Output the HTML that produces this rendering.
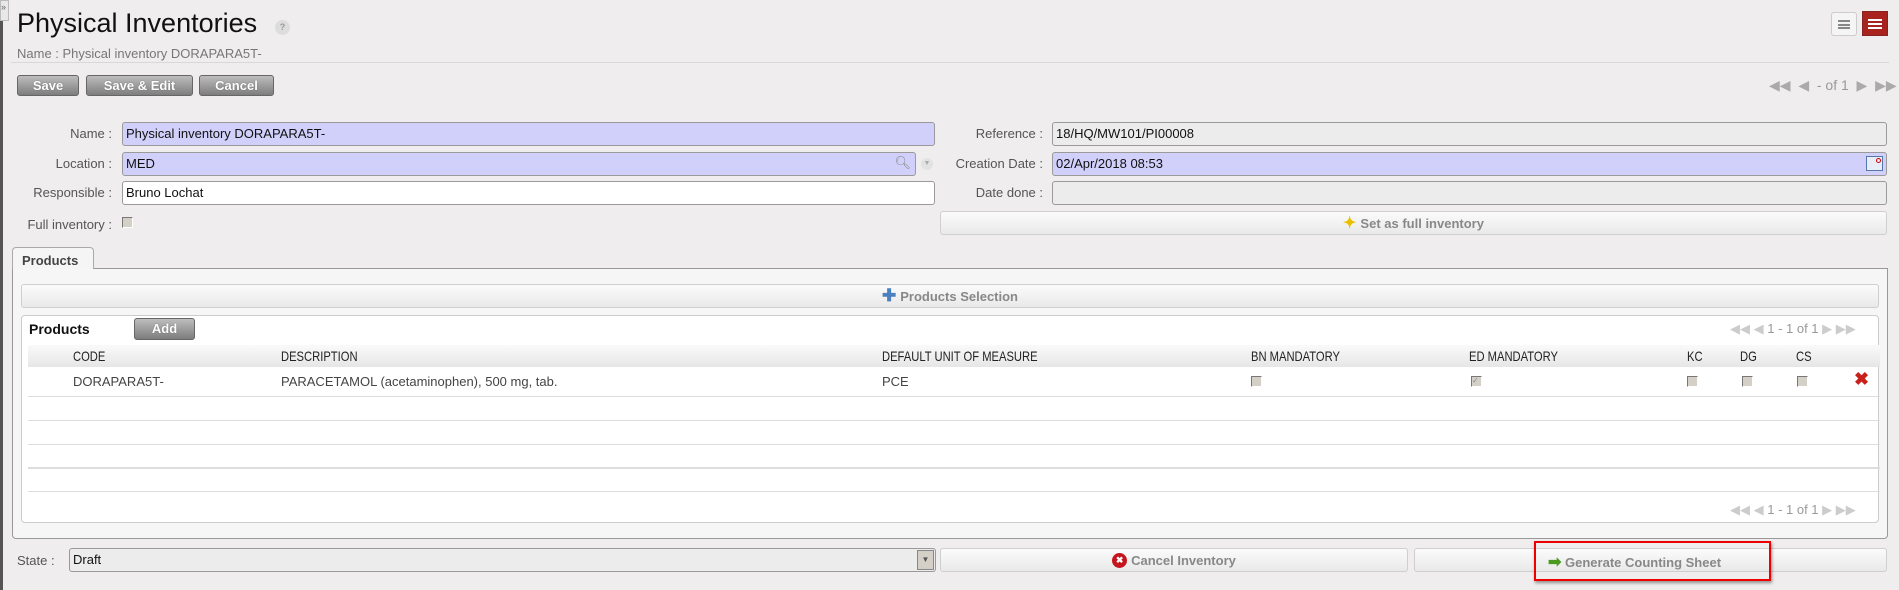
<!DOCTYPE html>
<html><head><meta charset="utf-8"><style>
*{box-sizing:border-box;margin:0;padding:0}
body{width:1899px;height:590px;background:#efeded;font-family:"Liberation Sans",sans-serif;font-size:13px;color:#333;position:relative;overflow:hidden}
.a{position:absolute}
.lbl{position:absolute;color:#555;font-size:13px;text-align:right}
.inp{position:absolute;border:1px solid #9a9a9a;border-radius:3px;background:#fff;padding:3px 3px;font-size:13px;color:#111;height:24px;line-height:16px}
.blue{background:#d0d0fb}
.ro{background:#ececec}
.btn{position:absolute;height:21px;border:1px solid #666;border-radius:3px;background:linear-gradient(#bdbdbd,#7d7d7d);color:#fff;font-weight:bold;font-size:13px;text-align:center;line-height:19px;text-shadow:0 0 1px #555}
.wbtn{position:absolute;border:1px solid #cfcfcf;border-radius:3px;background:linear-gradient(#fbfbfb,#e9e9e9);color:#888;font-weight:bold;font-size:13px;display:flex;align-items:center;justify-content:center;gap:4px}
.hd{position:absolute;font-size:14px;color:#222;top:348px;transform:scaleX(.8);transform-origin:0 0;white-space:nowrap}
.cb{position:absolute;width:11px;height:11px;background:#d4d0c8;border-top:1px solid #777;border-left:1px solid #777;border-right:1px solid #fff;border-bottom:1px solid #fff;top:376px}
.rl{position:absolute;left:28px;width:1852px;height:1px;background:#ddd}
.pg{position:absolute;color:#999;font-size:13px}
</style></head><body>
<div class="a" style="left:0;top:0;width:3px;height:590px;background:#555"></div>
<div class="a" style="left:0;top:0;width:9px;height:21px;background:#e8e8e8;border:1px solid #bbb;font-size:9px;color:#666;line-height:12px">»</div>

<div class="a" style="left:17px;top:8px;font-size:27px;color:#111">Physical Inventories</div>
<div class="a" style="left:275px;top:20px;width:15px;height:15px;border-radius:50%;background:#ddd;color:#999;font-size:9px;text-align:center;line-height:15px;font-weight:bold">?</div>
<div class="a" style="left:17px;top:46px;color:#777;font-size:13px">Name : Physical inventory DORAPARA5T-</div>
<div class="a" style="left:11px;top:62px;width:1878px;height:1px;background:#d8d8d8"></div>

<div class="a" style="left:1831px;top:12px;width:26px;height:24px;border:1px solid #ccc;border-radius:3px;background:#f5f5f5"><div style="margin:7px 6px;height:9px;border-top:2px solid #888;border-bottom:2px solid #888;"><div style="margin-top:1.5px;height:2px;background:#888"></div></div></div>
<div class="a" style="left:1862px;top:11px;width:26px;height:25px;background:#a8231d;border:1px solid #822"><div style="margin:7px 5px;height:10px;border-top:2px solid #fff;border-bottom:2px solid #fff"><div style="margin-top:2px;height:2px;background:#fff"></div></div></div>

<div class="btn" style="left:17px;top:75px;width:62px">Save</div>
<div class="btn" style="left:86px;top:75px;width:107px">Save &amp; Edit</div>
<div class="btn" style="left:199px;top:75px;width:75px">Cancel</div>
<div class="pg" style="left:1769px;top:77px;font-size:14px;color:#aaa">◀◀ &nbsp;◀ &nbsp;<b style="color:#999;font-weight:normal">- of 1</b> &nbsp;▶ &nbsp;▶▶</div>

<div class="lbl" style="left:0;width:112px;top:126px">Name :</div>
<div class="inp blue" style="left:122px;top:122px;width:813px">Physical inventory DORAPARA5T-</div>
<div class="lbl" style="left:0;width:112px;top:156px">Location :</div>
<div class="inp blue" style="left:122px;top:152px;width:794px">MED<span style="position:absolute;right:4px;top:2px;color:#888">&#x1F50D;&#xFE0E;</span></div>
<div class="a" style="left:921px;top:158px;width:12px;height:12px;border-radius:50%;background:#e2e2e2;color:#aaa;font-size:7px;text-align:center;line-height:12px">▼</div>
<div class="lbl" style="left:0;width:112px;top:185px">Responsible :</div>
<div class="inp" style="left:122px;top:181px;width:813px">Bruno Lochat</div>
<div class="lbl" style="left:0;width:112px;top:217px">Full inventory :</div>
<div class="cb" style="left:122px;top:217px"></div>

<div class="lbl" style="left:900px;width:143px;top:126px">Reference :</div>
<div class="inp ro" style="left:1052px;top:122px;width:835px">18/HQ/MW101/PI00008</div>
<div class="lbl" style="left:900px;width:143px;top:156px">Creation Date :</div>
<div class="inp blue" style="left:1052px;top:152px;width:835px">02/Apr/2018 08:53<span style="position:absolute;right:3px;top:3px;width:17px;height:15px;background:#e8eef8;border:1px solid #5577aa"><span style="position:absolute;right:1px;top:1px;width:5px;height:5px;border:1px solid #c00;border-radius:50%"></span></span></div>
<div class="lbl" style="left:900px;width:143px;top:185px">Date done :</div>
<div class="inp ro" style="left:1052px;top:181px;width:835px"></div>
<div class="wbtn" style="left:940px;top:211px;width:947px;height:24px"><span style="color:#e8c000;font-size:16px">✦</span>Set as full inventory</div>

<div class="a" style="left:12px;top:247px;width:82px;height:22px;border:1px solid #aaa;border-bottom:none;border-radius:4px 4px 0 0;background:#f5f5f5;font-weight:bold;color:#444;font-size:13px;padding:5px 0 0 9px;z-index:2">Products</div>
<div class="a" style="left:12px;top:268px;width:1876px;height:271px;border:1px solid #999;border-radius:0 0 4px 4px;background:#f6f6f6"></div>
<div class="wbtn" style="left:21px;top:284px;width:1858px;height:24px"><span style="color:#4a7fc0;font-size:17px">✚</span>Products Selection</div>
<div class="a" style="left:21px;top:315px;width:1858px;height:208px;border:1px solid #ccc;border-radius:4px;background:#fff"></div>
<div class="a" style="left:29px;top:321px;font-weight:bold;color:#111;font-size:14px">Products</div>
<div class="btn" style="left:134px;top:318px;width:61px;height:22px">Add</div>
<div class="pg" style="left:1730px;top:321px;color:#999"><span style="color:#ccc">◀◀ ◀</span> 1 - 1 of 1 <span style="color:#ccc">▶ ▶▶</span></div>
<div class="a" style="left:28px;top:345px;width:1852px;height:22px;background:linear-gradient(#fafafa,#e6e6e6)"></div>
<div class="hd" style="left:73px">CODE</div>
<div class="hd" style="left:281px">DESCRIPTION</div>
<div class="hd" style="left:882px">DEFAULT UNIT OF MEASURE</div>
<div class="hd" style="left:1251px">BN MANDATORY</div>
<div class="hd" style="left:1469px">ED MANDATORY</div>
<div class="hd" style="left:1687px">KC</div>
<div class="hd" style="left:1740px">DG</div>
<div class="hd" style="left:1796px">CS</div>
<div class="a" style="left:73px;top:374px;color:#444">DORAPARA5T-</div>
<div class="a" style="left:281px;top:374px;color:#444">PARACETAMOL (acetaminophen), 500 mg, tab.</div>
<div class="a" style="left:882px;top:374px;color:#444">PCE</div>
<div class="cb" style="left:1251px"></div>
<div class="cb" style="left:1471px;font-size:8px;line-height:8px;color:#888">✓</div>
<div class="cb" style="left:1687px"></div>
<div class="cb" style="left:1742px"></div>
<div class="cb" style="left:1797px"></div>
<div class="a" style="left:1854px;top:369px;color:#c8201a;font-size:18px;font-weight:bold">✖</div>
<div class="rl" style="top:396px"></div>
<div class="rl" style="top:420px"></div>
<div class="rl" style="top:444px"></div>
<div class="rl" style="top:467px;height:2px"></div>
<div class="rl" style="top:491px"></div>
<div class="pg" style="left:1730px;top:502px;color:#999"><span style="color:#ccc">◀◀ ◀</span> 1 - 1 of 1 <span style="color:#ccc">▶ ▶▶</span></div>

<div class="lbl" style="left:17px;top:553px;text-align:left">State :</div>
<div class="inp ro" style="left:69px;top:548px;width:867px;height:24px">Draft<span style="position:absolute;right:1px;top:1px;width:17px;height:20px;background:#d4d0c8;border:1px solid #888;font-size:8px;text-align:center;line-height:18px;color:#555">▼</span></div>
<div class="wbtn" style="left:940px;top:548px;width:468px;height:24px"><span style="display:inline-block;width:15px;height:15px;border-radius:50%;background:#c4161c;color:#fff;font-size:9px;line-height:15px;text-align:center">✖</span>Cancel Inventory</div>
<div class="wbtn" style="left:1414px;top:548px;width:473px;height:24px"></div>
<div class="a" style="left:1534px;top:541px;width:237px;height:40px;border:2px solid #e00;box-shadow:1px 2px 3px rgba(0,0,0,.4)"></div>
<div class="a" style="left:1548px;top:552px;font-weight:bold;color:#888;font-size:13px"><span style="color:#4a9a20;font-size:16px">➡</span> Generate Counting Sheet</div>
</body></html>
